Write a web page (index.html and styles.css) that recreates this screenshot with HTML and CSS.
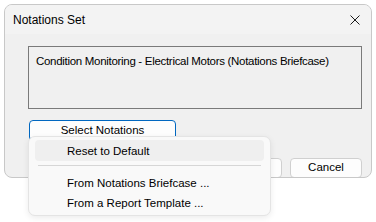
FILE: index.html
```html
<!DOCTYPE html>
<html>
<head>
<title>Notations Set</title>
<link rel="stylesheet" href="styles.css">
</head>
<body>

  <div class="dialog">

    <div class="titlebar">
      <span class="title">Notations Set</span>
      <svg class="close" width="10" height="10" viewBox="0 0 10 10">
        <path d="M0.5 0.5 L9.5 9.5 M9.5 0.5 L0.5 9.5" stroke="#1a1a1a" stroke-width="1" fill="none"/>
      </svg>
    </div>

    <div class="client">
      <div class="notationbox">
        Condition Monitoring - Electrical Motors (Notations Briefcase)
      </div>

      <div class="selectrow">
        <div class="btn btn-default">Select Notations</div>
      </div>

      <div class="bottomrow">
        <div class="btn">OK</div>
        <div class="btn">Cancel</div>
      </div>
    </div>

  </div>

  <!-- popup menu from the Select Notations button -->
  <div class="menu">
    <div class="menuitem hover">Reset to Default</div>
    <div class="separator"></div>
    <div class="menuitem">From Notations Briefcase ...</div>
    <div class="menuitem">From a Report Template ...</div>
  </div>

</body>
</html>
```

FILE: styles.css
```css
html {
  height: 100%;
}

body {
  margin: 0;
  padding: 4px;
  height: 100%;
  box-sizing: border-box;
  background: #ffffff;
  font-family: "Liberation Sans", Arial, sans-serif;
  font-size: 11.5px;
  color: #000;
  position: relative;
}

.dialog {
  width: 366px;
  height: 172px;
  border: 1px solid #c8c8c8;
  border-radius: 8px;
  background: #f0f0f0;
  overflow: hidden;
  display: flex;
  flex-direction: column;
}

.titlebar {
  height: 29px;
  background: #f3f3f3;
  display: flex;
  align-items: center;
  justify-content: space-between;
  padding: 0 11px 0 8px;
  flex-shrink: 0;
  font-size: 12px;
}

.title {
  padding-top: 1px;
}

.close {
  display: block;
}

.client {
  padding: 12px 9px 0 23px;
  display: flex;
  flex-direction: column;
}

.notationbox {
  height: 49px;
  border: 1px solid #7a7a7a;
  padding: 7px 7px 5px 7px;
  line-height: 14px;
  white-space: nowrap;
  overflow: hidden;
  letter-spacing: -0.3px;
}

.selectrow {
  margin-top: 11px;
  display: flex;
}

.btn {
  box-sizing: border-box;
  height: 20px;
  width: 72px;
  border: 1px solid #d0d0d0;
  border-radius: 4px;
  background: #fdfdfd;
  display: flex;
  justify-content: center;
  align-items: center;
  line-height: 1;
}

.btn-default {
  width: 147px;
  height: 21px;
  border-color: #0067c0;
  margin-left: 1px;
}

.bottomrow {
  margin-top: 17px;
  display: flex;
  justify-content: flex-end;
  gap: 8px;
}

.menu {
  position: absolute;
  left: 28px;
  top: 136px;
  width: 243px;
  height: 80px;
  box-sizing: border-box;
  padding: 3px 6px;
  background: #f9f9f9;
  border: 1px solid #e4e4e4;
  border-radius: 7px;
  box-shadow: 0 2px 6px rgba(0, 0, 0, 0.08);
}

.menuitem {
  height: 20px;
  padding-left: 32px;
  display: flex;
  align-items: center;
  border-radius: 4px;
}

.menuitem.hover {
  height: 21px;
  background: #efefef;
}

.separator {
  height: 1px;
  background: #d6d6d6;
  margin: 4px 3px 7px 3px;
}
```
